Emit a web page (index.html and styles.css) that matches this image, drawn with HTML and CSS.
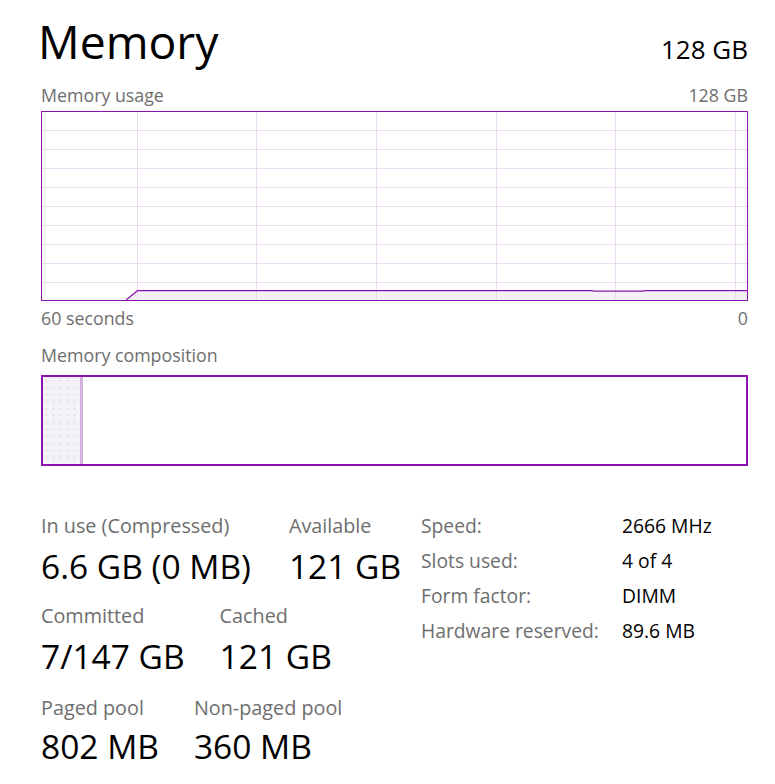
FILE: index.html
```html
<!DOCTYPE html>
<html lang="en">
<head>
<meta charset="utf-8">
<title>Memory</title>
<link rel="stylesheet" href="styles.css">
</head>
<body>
<div class="page">
  <header class="head">
    <h1 class="title">Memory</h1>
    <span class="total">128 GB</span>
  </header>

  <div class="axis axis-top">
    <span>Memory usage</span>
    <span>128 GB</span>
  </div>
  <div class="chart">
    <svg class="chart-svg" viewBox="0 0 705 188" preserveAspectRatio="none" width="705" height="188">
      <defs>
        <pattern id="dots" width="6" height="6" patternUnits="userSpaceOnUse">
          <rect width="6" height="6" fill="#f4f2f6"/>
          <circle cx="3" cy="4" r="0.6" fill="#d6cddc"/>
        </pattern>
      </defs>
      <polygon points="84,188 95.5,178.7 705,178.7 705,188" fill="url(#dots)"/>
      <g stroke="#ecdcf1" stroke-width="1">
        <line x1="0" y1="18.5" x2="705" y2="18.5"/>
        <line x1="0" y1="37.5" x2="705" y2="37.5"/>
        <line x1="0" y1="56.5" x2="705" y2="56.5"/>
        <line x1="0" y1="75.5" x2="705" y2="75.5"/>
        <line x1="0" y1="94.5" x2="705" y2="94.5"/>
        <line x1="0" y1="113.5" x2="705" y2="113.5"/>
        <line x1="0" y1="132.5" x2="705" y2="132.5"/>
        <line x1="0" y1="151.5" x2="705" y2="151.5"/>
        <line x1="0" y1="170.5" x2="705" y2="170.5"/>
        <line x1="95.5" y1="0" x2="95.5" y2="188"/>
        <line x1="214.5" y1="0" x2="214.5" y2="188"/>
        <line x1="334.5" y1="0" x2="334.5" y2="188"/>
        <line x1="454.5" y1="0" x2="454.5" y2="188"/>
        <line x1="573.5" y1="0" x2="573.5" y2="188"/>
        <line x1="693.5" y1="0" x2="693.5" y2="188"/>
      </g>
      <polyline points="84,188 95.5,178.7 549,178.7 553,179.2 600,179.2 604,178.7 705,178.7" fill="none" stroke="#8b12ae" stroke-width="1.2"/>
    </svg>
  </div>
  <div class="axis axis-bottom">
    <span>60 seconds</span>
    <span>0</span>
  </div>

  <div class="axis comp-label">Memory composition</div>
  <div class="comp">
    <div class="comp-inuse"></div>
    <div class="comp-sep"></div>
  </div>

  <section class="stats">
    <div class="stats-main">
      <div class="stat-row row-first">
        <div class="stat">
          <div class="stat-label">In use (Compressed)</div>
          <div class="stat-value">6.6 GB (0 MB)</div>
        </div>
        <div class="stat">
          <div class="stat-label">Available</div>
          <div class="stat-value">121 GB</div>
        </div>
      </div>
      <div class="stat-row">
        <div class="stat">
          <div class="stat-label">Committed</div>
          <div class="stat-value">7/147 GB</div>
        </div>
        <div class="stat">
          <div class="stat-label">Cached</div>
          <div class="stat-value">121 GB</div>
        </div>
      </div>
      <div class="stat-row row-last">
        <div class="stat">
          <div class="stat-label">Paged pool</div>
          <div class="stat-value">802 MB</div>
        </div>
        <div class="stat">
          <div class="stat-label">Non-paged pool</div>
          <div class="stat-value">360 MB</div>
        </div>
      </div>
    </div>
    <dl class="specs">
      <dt>Speed:</dt><dd>2666 MHz</dd>
      <dt>Slots used:</dt><dd>4 of 4</dd>
      <dt>Form factor:</dt><dd>DIMM</dd>
      <dt>Hardware reserved:</dt><dd>89.6 MB</dd>
    </dl>
  </section>
</div>
</body>
</html>
```

FILE: styles.css
```css
* {
  box-sizing: border-box;
}

html, body {
  margin: 0;
  padding: 0;
  background: #ffffff;
}

body {
  font-family: "Open Sans", "Noto Sans", "DejaVu Sans", sans-serif;
  color: #000000;
  width: 775px;
  height: 784px;
  overflow: hidden;
}

.page {
  padding: 12px 27px 0 41px;
}

.head {
  display: flex;
  justify-content: space-between;
  align-items: baseline;
  height: 60px;
}

.title {
  margin: 0 0 0 -3px;
  font-size: 46.3px;
  font-weight: 400;
  line-height: 60px;
}

.total {
  font-size: 26px;
  line-height: 60px;
}

.axis {
  display: flex;
  justify-content: space-between;
  font-size: 17.8px;
  line-height: 22px;
  color: #6e6e6e;
}

.axis-top {
  margin-top: 12px;
}

.chart {
  margin-top: 5px;
  height: 190px;
  border: 1px solid #8b12ae;
  overflow: hidden;
}

.chart-svg {
  display: block;
}

.axis-bottom {
  margin-top: 6px;
}

.comp-label {
  margin-top: 15px;
}

.comp {
  margin-top: 9px;
  height: 91px;
  border: 2px solid #8b12ae;
  display: flex;
}

.comp-inuse {
  width: 37px;
  background-color: #f4f2f6;
  background-image: radial-gradient(circle, #d9d0df 0.7px, transparent 1.1px);
  background-size: 7px 7px;
}

.comp-sep {
  width: 3px;
  background: #d4b0dd;
}

.stats {
  margin-top: 42px;
  display: flex;
}

.stats-main {
  width: 380px;
  padding-top: 6px;
}

.stat-row {
  display: flex;
  gap: 35px;
}

.stat-row + .stat-row {
  margin-top: 18px;
}

.row-first {
  gap: 38px;
}

.stat-row.row-last {
  margin-top: 20px;
}

.stat-label {
  font-size: 19.8px;
  line-height: 24px;
  color: #6e6e6e;
  white-space: nowrap;
}

.stat-value {
  margin-top: 8px;
  font-size: 33.5px;
  line-height: 40px;
  color: #000000;
  white-space: nowrap;
}

.row-last .stat-value {
  margin-top: 6px;
}

.specs {
  margin: 0;
  display: grid;
  grid-template-columns: 201px auto;
  grid-auto-rows: 35px;
  font-size: 19.3px;
  line-height: 35px;
}

.specs dt {
  color: #6e6e6e;
}

.specs dd {
  margin: 0;
  color: #000000;
}
```
